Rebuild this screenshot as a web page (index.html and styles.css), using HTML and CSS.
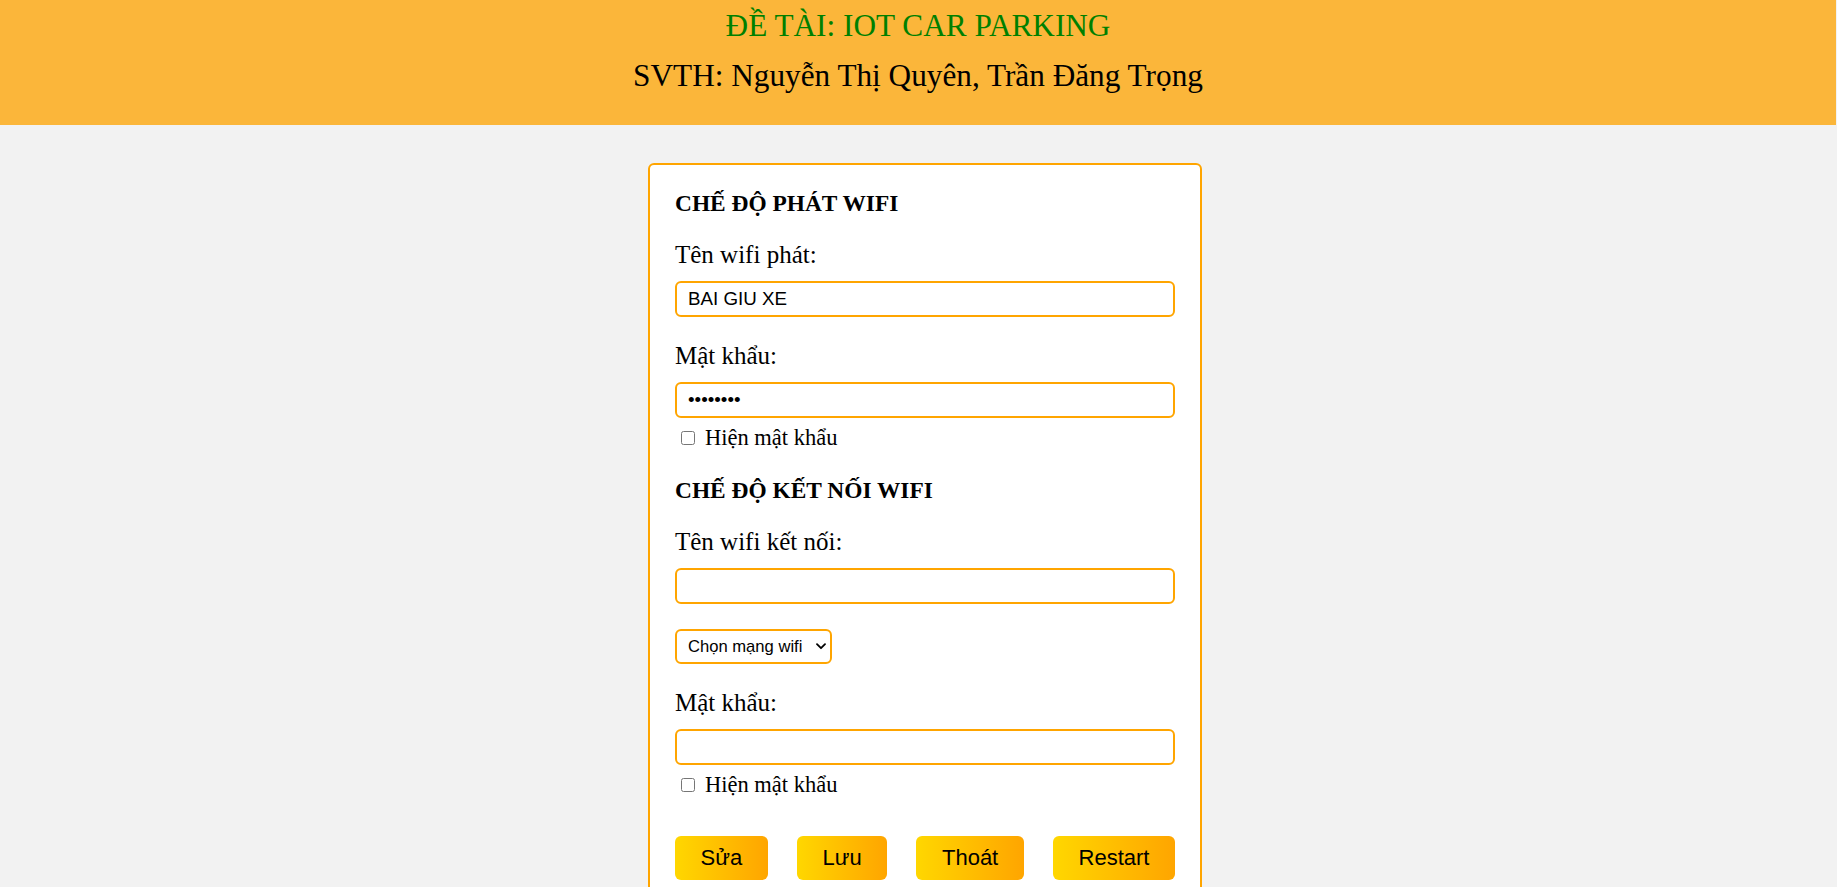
FILE: index.html
```html
<!DOCTYPE html>
<html lang="vi">
<head>
<meta charset="utf-8">
<title>IOT Car Parking</title>
<link rel="stylesheet" href="styles.css">
</head>
<body>
<header class="banner">
  <h1 class="banner-title">ĐỀ TÀI: IOT CAR PARKING</h1>
  <h2 class="banner-authors">SVTH: Nguyễn Thị Quyên, Trần Đăng Trọng</h2>
</header>
<main class="page">
  <form class="card">
    <h3 class="section-title">CHẾ ĐỘ PHÁT WIFI</h3>
    <label class="field-label" for="ap-ssid">Tên wifi phát:</label>
    <input class="text-input" id="ap-ssid" type="text" value="BAI GIU XE">
    <label class="field-label" for="ap-pass">Mật khẩu:</label>
    <input class="text-input" id="ap-pass" type="password" value="12345678">
    <label class="check-row"><input class="check" type="checkbox"><span>Hiện mật khẩu</span></label>

    <h3 class="section-title section-title--spaced">CHẾ ĐỘ KẾT NỐI WIFI</h3>
    <label class="field-label" for="sta-ssid">Tên wifi kết nối:</label>
    <input class="text-input" id="sta-ssid" type="text" value="">
    <div class="select-wrap">
      <select class="select">
        <option>Chọn mạng wifi</option>
      </select>
      <svg class="select-arrow" width="10" height="7" viewBox="0 0 10 7"><path d="M1 1.2 L5 5.2 L9 1.2" fill="none" stroke="#000" stroke-width="1.8" stroke-linecap="round" stroke-linejoin="round"/></svg>
    </div>
    <label class="field-label" for="sta-pass">Mật khẩu:</label>
    <input class="text-input" id="sta-pass" type="password" value="">
    <label class="check-row"><input class="check" type="checkbox"><span>Hiện mật khẩu</span></label>

    <div class="actions">
      <button class="btn" type="button">Sửa</button>
      <button class="btn" type="button">Lưu</button>
      <button class="btn" type="button">Thoát</button>
      <button class="btn" type="button">Restart</button>
    </div>
  </form>
</main>
</body>
</html>
```
FILE: styles.css
```css
html, body {
  margin: 0;
  padding: 0;
  overflow: hidden;
}

body {
  background: #f2f2f2;
  font-family: "Liberation Serif", "Times New Roman", serif;
  color: #000;
}

.banner {
  width: calc(100% - 1px);
  background: #fbb63a;
  padding: 9px 0 32px;
  text-align: center;
}

.banner-title,
.banner-authors {
  margin: 0;
  font-size: 31.25px;
  line-height: 34px;
  font-weight: normal;
}

.banner-title {
  color: #008000;
}

.banner-authors {
  margin-top: 16px;
  color: #000;
}

.page {
  padding-top: 38px;
}

.card {
  box-sizing: border-box;
  width: 554px;
  margin-left: calc(50% - 270.5px);
  background: #fff;
  border: 2px solid #ffa500;
  border-radius: 6px;
  padding: 25px 25px 25px;
  display: flex;
  flex-direction: column;
}

.section-title {
  margin: 0;
  font-size: 23.4px;
  line-height: 26px;
  font-weight: bold;
}

.section-title--spaced {
  margin-top: 26px;
}

.field-label {
  display: block;
  margin: 24px 0 11px;
  font-size: 25px;
  line-height: 30px;
}

.text-input {
  box-sizing: border-box;
  display: block;
  width: 100%;
  height: 36px;
  margin: 0;
  padding: 0 11px;
  border: 2px solid #ffa500;
  border-radius: 6px;
  background: #fff;
  font-family: "Liberation Sans", Arial, sans-serif;
  font-size: 18.75px;
  color: #000;
  outline: none;
}

.check-row {
  display: flex;
  align-items: center;
  margin-top: 7px;
  height: 26px;
  font-size: 22.5px;
  line-height: 26px;
}

.check {
  width: 14px;
  height: 14px;
  margin: 0 10px 0 6px;
}

.select-wrap {
  position: relative;
  align-self: flex-start;
  margin-top: 25px;
}

.select {
  box-sizing: border-box;
  display: block;
  width: 157px;
  height: 35px;
  margin: 0;
  padding: 0 0 0 11px;
  border: 2px solid #ffa500;
  border-radius: 6px;
  background: #fff;
  appearance: none;
  -webkit-appearance: none;
  font-family: "Liberation Sans", Arial, sans-serif;
  font-size: 16.6px;
  color: #000;
}

.select-arrow {
  position: absolute;
  right: 6px;
  top: 14px;
  pointer-events: none;
}

.actions {
  display: flex;
  justify-content: space-between;
  margin-top: 38px;
}

.btn {
  margin: 0;
  padding: 9px 25.5px;
  border: none;
  border-radius: 6px;
  background: linear-gradient(to right, #ffd700, #ffa500);
  font-family: "Liberation Sans", Arial, sans-serif;
  font-size: 22px;
  line-height: 26px;
  color: #000;
}
```
